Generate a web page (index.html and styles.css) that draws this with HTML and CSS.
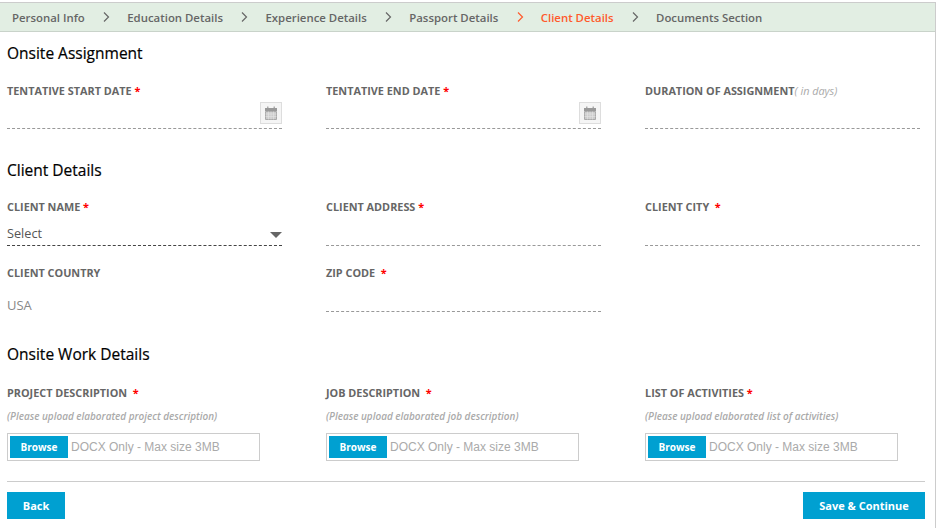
FILE: index.html
```html
<!DOCTYPE html>
<html>
<head>
    <title>Client Details</title>
    <link rel="stylesheet" href="styles.css">
</head>
<body>
    <div class="page">
        <ul class="steps">
            <li>Personal Info</li>
            <li class="chevron"><svg width="8" height="12" viewBox="0 0 8 12"><path d="M2 1.5 L6.5 6 L2 10.5" /></svg></li>
            <li>Education Details</li>
            <li class="chevron"><svg width="8" height="12" viewBox="0 0 8 12"><path d="M2 1.5 L6.5 6 L2 10.5" /></svg></li>
            <li>Experience Details</li>
            <li class="chevron"><svg width="8" height="12" viewBox="0 0 8 12"><path d="M2 1.5 L6.5 6 L2 10.5" /></svg></li>
            <li>Passport Details</li>
            <li class="chevron active"><svg width="8" height="12" viewBox="0 0 8 12"><path d="M2 1.5 L6.5 6 L2 10.5" /></svg></li>
            <li class="active">Client Details</li>
            <li class="chevron"><svg width="8" height="12" viewBox="0 0 8 12"><path d="M2 1.5 L6.5 6 L2 10.5" /></svg></li>
            <li>Documents Section</li>
        </ul>

        <form class="content">
            <h2 class="section-title first">Onsite Assignment</h2>
            <div class="row row-dates">
                <div class="field">
                    <label>TENTATIVE START DATE <span class="req">*</span></label>
                    <div class="line">
                        <span class="cal-btn">
                            <svg width="12" height="14" viewBox="0 0 12 14"><path class="cal-top" d="M0 2 H2.2 V0.5 H3.4 V2 H8.6 V0.5 H9.8 V2 H12 V5 H0 Z" /><path class="cal-body" d="M0.5 5.5 H11.5 V13.5 H0.5 Z" /><path class="cal-grid" d="M0.5 8 H11.5 M0.5 10.5 H11.5 M3.5 5.5 V13.5 M6 5.5 V13.5 M8.5 5.5 V13.5" /></svg>
                        </span>
                    </div>
                </div>
                <div class="field">
                    <label>TENTATIVE END DATE <span class="req">*</span></label>
                    <div class="line">
                        <span class="cal-btn">
                            <svg width="12" height="14" viewBox="0 0 12 14"><path class="cal-top" d="M0 2 H2.2 V0.5 H3.4 V2 H8.6 V0.5 H9.8 V2 H12 V5 H0 Z" /><path class="cal-body" d="M0.5 5.5 H11.5 V13.5 H0.5 Z" /><path class="cal-grid" d="M0.5 8 H11.5 M0.5 10.5 H11.5 M3.5 5.5 V13.5 M6 5.5 V13.5 M8.5 5.5 V13.5" /></svg>
                        </span>
                    </div>
                </div>
                <div class="field">
                    <label>DURATION OF ASSIGNMENT<em class="hint-inline">( in days)</em></label>
                    <div class="line"></div>
                </div>
            </div>

            <h2 class="section-title">Client Details</h2>
            <div class="row row-client">
                <div class="field">
                    <label>CLIENT NAME <span class="req">*</span></label>
                    <div class="line select-line">
                        <span>Select</span>
                        <span class="arrow"></span>
                    </div>
                </div>
                <div class="field">
                    <label>CLIENT ADDRESS <span class="req">*</span></label>
                    <div class="line"></div>
                </div>
                <div class="field">
                    <label>CLIENT CITY &nbsp;<span class="req">*</span></label>
                    <div class="line"></div>
                </div>
                <div class="field">
                    <label>CLIENT COUNTRY</label>
                    <div class="static">USA</div>
                </div>
                <div class="field">
                    <label>ZIP CODE &nbsp;<span class="req">*</span></label>
                    <div class="line"></div>
                </div>
            </div>

            <h2 class="section-title last">Onsite Work Details</h2>
            <div class="row row-uploads">
                <div class="field">
                    <label>PROJECT DESCRIPTION &nbsp;<span class="req">*</span></label>
                    <p class="hint">(Please upload elaborated project description)</p>
                    <div class="upload"><button type="button" class="btn-browse">Browse</button><span>DOCX Only - Max size 3MB</span></div>
                </div>
                <div class="field">
                    <label>JOB DESCRIPTION &nbsp;<span class="req">*</span></label>
                    <p class="hint">(Please upload elaborated job description)</p>
                    <div class="upload"><button type="button" class="btn-browse">Browse</button><span>DOCX Only - Max size 3MB</span></div>
                </div>
                <div class="field">
                    <label>LIST OF ACTIVITIES <span class="req">*</span></label>
                    <p class="hint">(Please upload elaborated list of activities)</p>
                    <div class="upload"><button type="button" class="btn-browse">Browse</button><span>DOCX Only - Max size 3MB</span></div>
                </div>
            </div>

            <div class="actions">
                <button type="button" class="btn btn-back">Back</button>
                <button type="button" class="btn btn-save">Save &amp; Continue</button>
            </div>
        </form>
    </div>
</body>
</html>
```

FILE: styles.css
```css
html, body {
    margin: 0;
    padding: 0;
    background-color: #ffffff;
    overflow: hidden;
}

body {
    font-family: "Open Sans", Arial, sans-serif;
    color: #666666;
}

.page {
    margin-top: 2px;
    width: 936px;
    height: 526px;
    box-sizing: border-box;
    border-right: 1px solid #cccccc;
}

.steps {
    display: flex;
    align-items: center;
    height: 30px;
    box-sizing: border-box;
    margin: 0;
    padding: 0 0 0 12px;
    list-style: none;
    background-color: #e2eee3;
    border-top: 1px solid #cccccc;
    border-bottom: 1px solid #c9d3ca;
    font-size: 11.4px;
    font-weight: 600;
    color: #666666;
}

.steps .chevron {
    display: flex;
    margin: 0 17.25px;
}

.steps .chevron path {
    fill: none;
    stroke: #666666;
    stroke-width: 1.2;
}

.steps .active {
    color: #ff5a2c;
}

.steps .chevron.active path {
    stroke: #ff5a2c;
}

.content {
    padding: 0 10px 0 7px;
}

.section-title {
    margin: 0;
    font-size: 15.5px;
    line-height: 20px;
    font-weight: 400;
    -webkit-text-stroke: 0.2px #000000;
    color: #000000;
    padding-top: 31px;
}

.section-title.first {
    padding-top: 11px;
}

.section-title.last {
    padding-top: 30px;
}

.row {
    display: grid;
    grid-template-columns: 275px 275px 275px;
    column-gap: 44px;
}

.row-dates {
    margin-top: 20px;
}

.row-client {
    margin-top: 19px;
    row-gap: 19px;
}

.row-uploads {
    margin-top: 21px;
}

.field label {
    display: block;
    font-size: 10.85px;
    line-height: 15px;
    font-weight: 700;
    color: #666666;
}

.req {
    color: #ff0000;
}

.hint-inline {
    font-weight: 400;
    color: #aaaaaa;
}

.line {
    display: flex;
    justify-content: flex-end;
    height: 32px;
    box-sizing: border-box;
    border-bottom: 1px dashed #999999;
}

.row-dates .line {
    height: 31px;
}

.cal-btn {
    display: flex;
    align-items: center;
    justify-content: center;
    width: 22px;
    height: 22px;
    box-sizing: border-box;
    margin-top: 4px;
    background-color: #f5f5f5;
    border: 1px solid #dddddd;
}

.cal-top {
    fill: #999999;
}

.cal-body {
    fill: #cccccc;
    stroke: #aaaaaa;
    stroke-width: 1;
}

.cal-grid {
    fill: none;
    stroke: #e6e6e6;
    stroke-width: 0.6;
}

.select-line {
    justify-content: space-between;
    align-items: flex-end;
    border-bottom-color: #444444;
    font-size: 12.7px;
    line-height: 18px;
    color: #555555;
    padding-bottom: 3px;
}

.arrow {
    width: 0;
    height: 0;
    margin-bottom: 4px;
    border-left: 6.5px solid transparent;
    border-right: 6.5px solid transparent;
    border-top: 6px solid #666666;
}

.static {
    padding-top: 16px;
    font-size: 13px;
    line-height: 18px;
    color: #888888;
}

.hint {
    margin: 9px 0 0;
    font-size: 9.95px;
    line-height: 14px;
    font-style: italic;
    font-weight: 600;
    color: #aaaaaa;
}

.upload {
    display: flex;
    align-items: center;
    gap: 3px;
    width: 253px;
    height: 28px;
    box-sizing: border-box;
    margin-top: 10px;
    padding-left: 2px;
    border: 1px solid #cccccc;
    font-family: "Liberation Sans", Arial, sans-serif;
    font-size: 12px;
    color: #aaaaaa;
}

.btn-browse {
    width: 58px;
    height: 22px;
    padding: 0;
    border: none;
    background-color: #00a0d1;
    color: #ffffff;
    font-family: "Open Sans", Arial, sans-serif;
    font-size: 10px;
    font-weight: 700;
}

.actions {
    display: flex;
    justify-content: space-between;
    margin-top: 20px;
    padding-top: 10px;
    border-top: 1px solid #cccccc;
}

.btn {
    height: 27px;
    padding: 0;
    border: none;
    background-color: #00a0d1;
    color: #ffffff;
    font-family: "Open Sans", Arial, sans-serif;
    font-size: 11px;
    font-weight: 700;
}

.btn-back {
    width: 58px;
}

.btn-save {
    width: 122px;
}
```
